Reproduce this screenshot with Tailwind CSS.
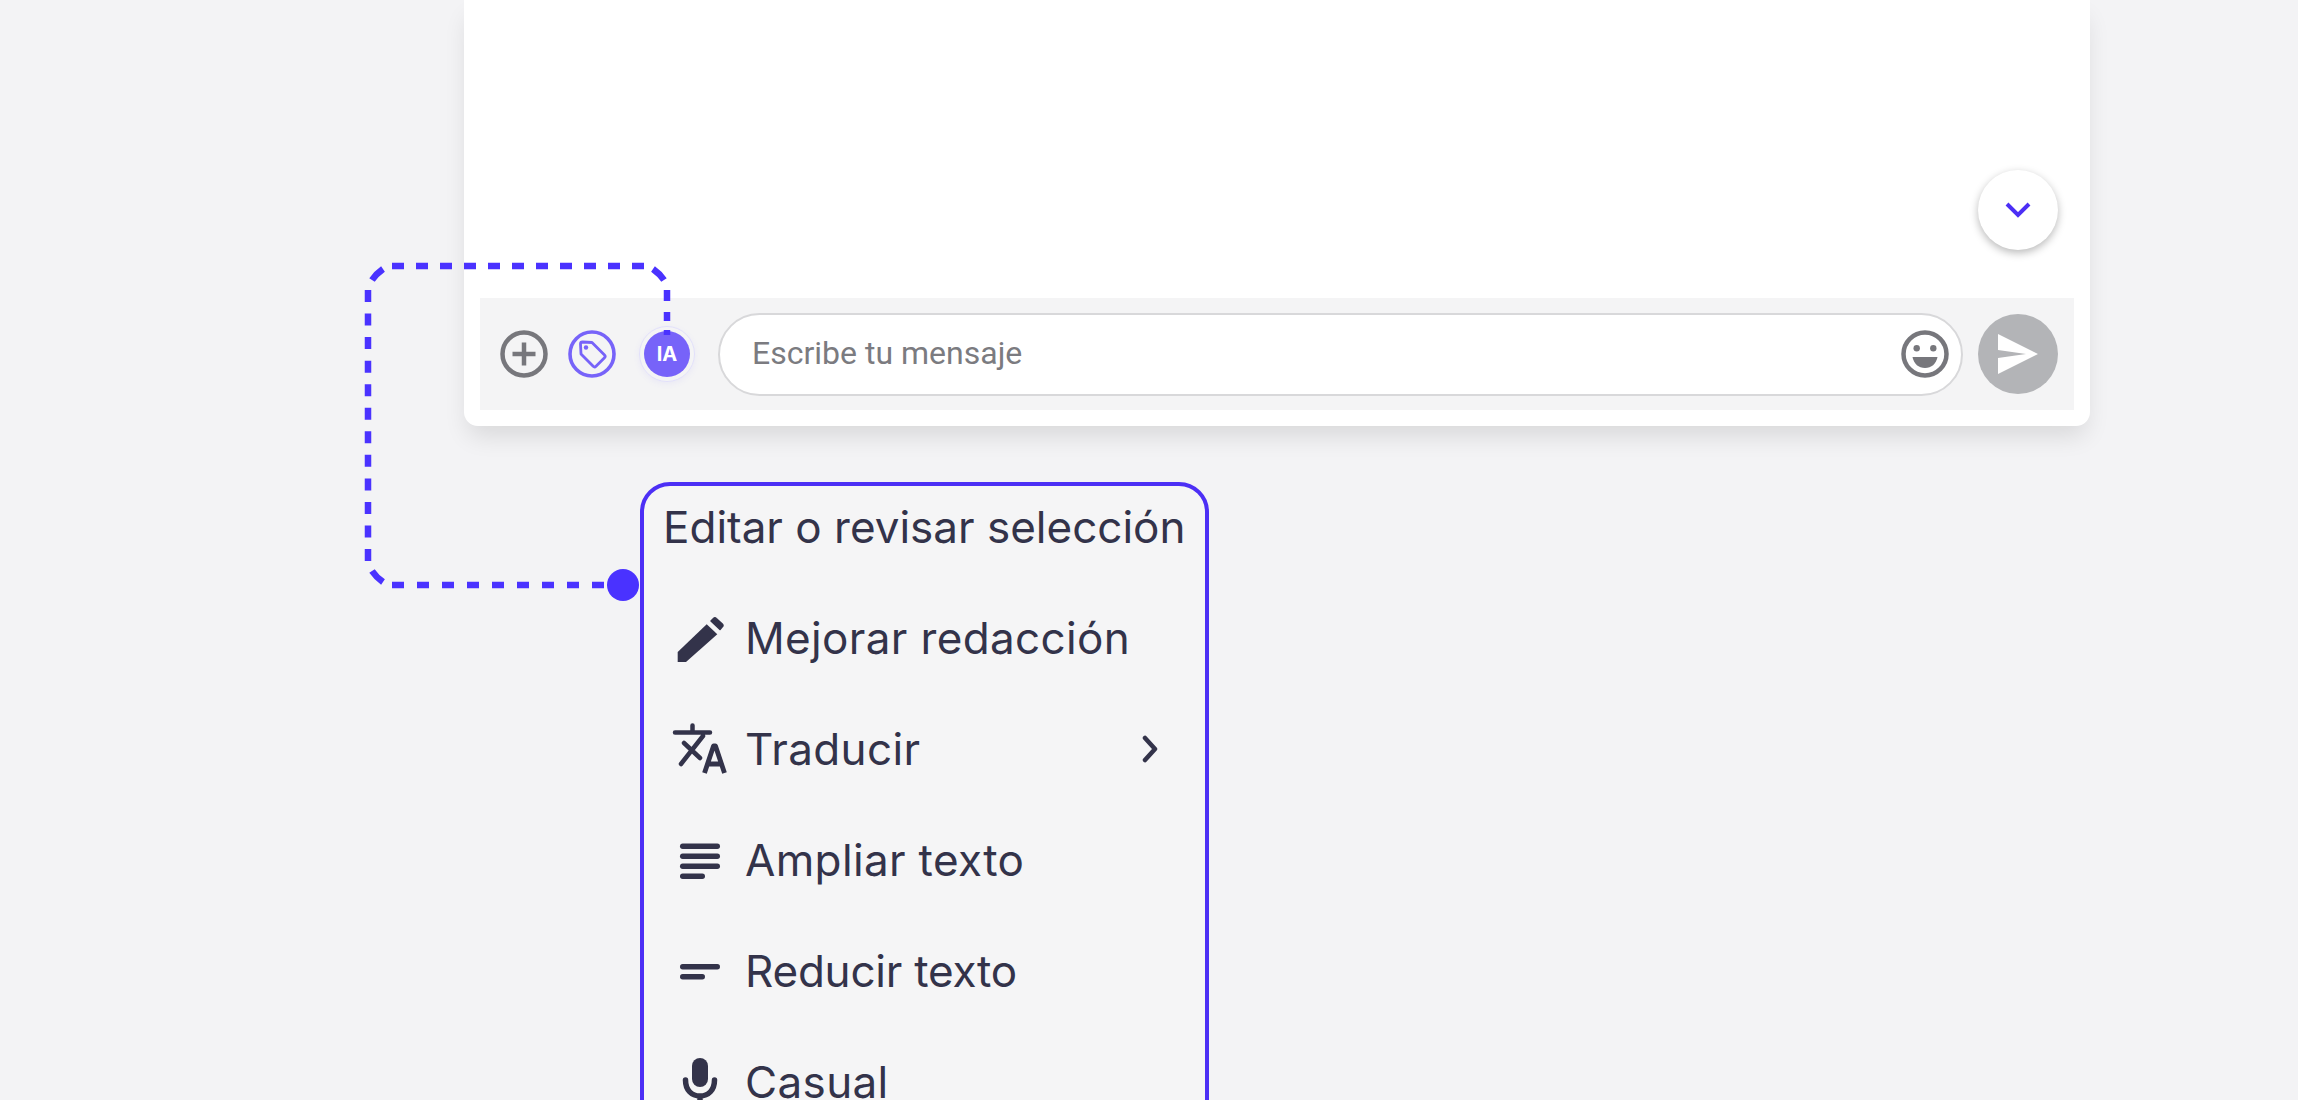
<!DOCTYPE html>
<html lang="es">
<head>
  <meta charset="UTF-8" />
  <title>Chat IA</title>
  <script src="https://cdn.jsdelivr.net/npm/@tailwindcss/browser@4"></script>
</head>
<body class="bg-[#f3f3f5]">
  <div class="relative h-[1100px] w-[2298px] overflow-hidden">

    <!-- Caja del chat -->
    <div class="ml-[464px] flex h-[426px] w-[1626px] flex-col justify-end rounded-b-[14px] bg-white px-4 pb-4 shadow-[0_14px_24px_-4px_rgba(0,0,0,0.11)]">
      <button class="mr-4 mb-12 flex h-20 w-20 items-center justify-center self-end rounded-full bg-white shadow-[0_3px_8px_rgba(0,0,0,0.28)]">
        <svg class="h-[26px] w-[26px]" viewBox="0 0 26 26" fill="none" stroke="#4c2ff5" stroke-width="4"><path d="M2 7l11 11L24 7" /></svg>
      </button>

      <div class="flex h-28 items-center bg-[#f4f4f5] pr-4 pl-5">
        <svg class="h-12 w-12 shrink-0" viewBox="0 0 48 48" fill="none" stroke="#77777c"><circle cx="24" cy="24" r="21.500" stroke-width="4.500" /><path d="M24 12.500v23M12.500 24h23" stroke-width="4.500" /></svg>
        <svg class="ml-5 h-12 w-12 shrink-0" viewBox="0 0 48 48" fill="none" stroke="#7763f9"><circle cx="24" cy="24" r="22" stroke-width="3.600" /><path d="M12.500 14a2 2 0 0 1 2-2l9.500 0.500L36.500 25a2 2 0 0 1 0 2.800l-8.500 8.500a2 2 0 0 1-2.800 0L13 24z" stroke-width="2.800" stroke-linejoin="round" /><circle cx="18" cy="17.500" r="2.200" fill="#7763f9" stroke="none" /></svg>
        <div class="ml-[23px] flex h-14 w-14 shrink-0 items-center justify-center rounded-full border border-[#e2e0fb] shadow-[0_2px_6px_rgba(119,99,249,0.08)]">
          <div class="flex h-[46px] w-[46px] items-center justify-center rounded-full bg-[#7763f9] font-['Inter',sans-serif] text-[20px] font-bold text-white">IA</div>
        </div>
        <div class="ml-[23px] flex h-[83px] w-[1245px] shrink-0 items-center justify-between rounded-full border-2 border-[#d8d8da] bg-white pr-[12px] pl-[32px]">
          <span class="pb-[2px] font-['Roboto',sans-serif] text-[32px] text-[#7b7b80]">Escribe tu mensaje</span>
          <svg class="h-12 w-12" viewBox="0 0 48 48" fill="none"><circle cx="24" cy="24" r="21.500" stroke="#77777c" stroke-width="4.500" /><circle cx="15.700" cy="18.300" r="3.200" fill="#77777c" /><circle cx="32.300" cy="18.300" r="3.200" fill="#77777c" /><path d="M11.500 27h25c-1.500 7-6 11-12.500 11s-11-4-12.500-11z" fill="#77777c" /></svg>
        </div>
        <button class="ml-[15px] flex h-20 w-20 shrink-0 items-center justify-center rounded-full bg-[#b3b4b7]">
          <svg class="h-10 w-10" viewBox="0 0 40 40" fill="white"><path d="M0 0L40 20L0 40V24L28 20L0 16z" /></svg>
        </button>
      </div>
    </div>

    <!-- Menu IA -->
    <div class="mt-[56px] ml-[640px] h-[700px] w-[569px] rounded-[30px] border-4 border-[#4c2ff5] bg-[#f5f5f6] pt-3 font-['Inter',sans-serif] text-[#33334a]">
      <div class="pl-[19px] text-[44px] leading-[58px]">Editar o revisar selección</div>
      <ul class="mt-[26px] text-[44px] tracking-[0.008em]">
        <li class="flex h-[111px] items-center">
          <span class="flex w-[101px] justify-center pl-[11px]"><svg class="h-[70px] w-[70px]" viewBox="0 0 70 70" fill="#33334a"><path d="M12.700 49L41.700 21.300L52.300 31.300L21 59H12.700z" /><path d="M46 18l2.500-2.500a2 2 0 0 1 2.800 0l6 5.500a2 2 0 0 1 0 2.800L55 26.500z" stroke="#33334a" stroke-width="1.500" stroke-linejoin="round" /></svg></span>
          <span>Mejorar redacción</span>
        </li>
        <li class="flex h-[111px] items-center">
          <span class="flex w-[101px] justify-center pl-[11px]"><svg class="h-[70px] w-[70px]" viewBox="0 0 70 70" fill="none" stroke="#33334a" stroke-width="4.500" stroke-linecap="round" stroke-linejoin="round"><path d="M10 18.500h35M27.500 11.500v7M38 22L16 50M19 29l16 15" /><path d="M39.500 59L48.500 32h2L59.500 59M43 50h13" stroke-linecap="butt" stroke-width="4.800" /></svg></span>
          <span class="flex-1">Traducir</span>
          <svg class="mr-[41px] h-7 w-7" viewBox="0 0 28 28" fill="none" stroke="#33334a" stroke-width="4.500" stroke-linecap="round" stroke-linejoin="round"><path d="M9 3l10 11L9 25" /></svg>
        </li>
        <li class="flex h-[111px] items-center">
          <span class="flex w-[101px] justify-center pl-[11px]"><svg class="h-[70px] w-[70px]" viewBox="0 0 70 70" fill="#33334a"><rect x="15" y="18.500" width="40" height="5.500" rx="2.700" /><rect x="15" y="28.500" width="40" height="5.500" rx="2.700" /><rect x="15" y="38.500" width="40" height="5.500" rx="2.700" /><rect x="15" y="48.500" width="25" height="5.500" rx="2.700" /></svg></span>
          <span>Ampliar texto</span>
        </li>
        <li class="flex h-[111px] items-center">
          <span class="flex w-[101px] justify-center pl-[11px]"><svg class="h-[70px] w-[70px]" viewBox="0 0 70 70" fill="#33334a"><rect x="15" y="28" width="40" height="5.500" rx="2.700" /><rect x="15" y="38" width="25" height="5.500" rx="2.700" /></svg></span>
          <span class="tracking-[-0.005em]">Reducir texto</span>
        </li>
        <li class="flex h-[111px] items-center">
          <span class="flex w-[101px] justify-center pl-[11px]"><svg class="h-[70px] w-[70px]" viewBox="0 0 70 70" fill="none" stroke="#33334a"><rect x="27" y="11" width="16" height="29" rx="8" fill="#33334a" stroke="none" /><path d="M20.500 33c0 10 6 16 14.500 16s14.500-6 14.500-16M35 49v12" stroke-width="5.500" stroke-linecap="round" /></svg></span>
          <span>Casual</span>
        </li>
      </ul>
    </div>

    <!-- Conector punteado: va libre sobre la pagina -->
    <svg class="absolute top-0 left-0" width="2298" height="1100" fill="none" stroke="#4a32ff" stroke-width="6.500">
      <path d="M667 335V330M667 321V312M667 301V290" />
      <path d="M664 280Q660 274 653 269M383 269Q376 274 372 280M372 571Q376 577 383 582" />
      <path d="M392 266H644" stroke-dasharray="12 12" />
      <path d="M368 290V561" stroke-dasharray="12 11.550" />
      <path d="M392 585H612" stroke-dasharray="12 13" />
      <circle cx="623" cy="585" r="16" fill="#4a32ff" stroke="none" />
    </svg>
  </div>
</body>
</html>
